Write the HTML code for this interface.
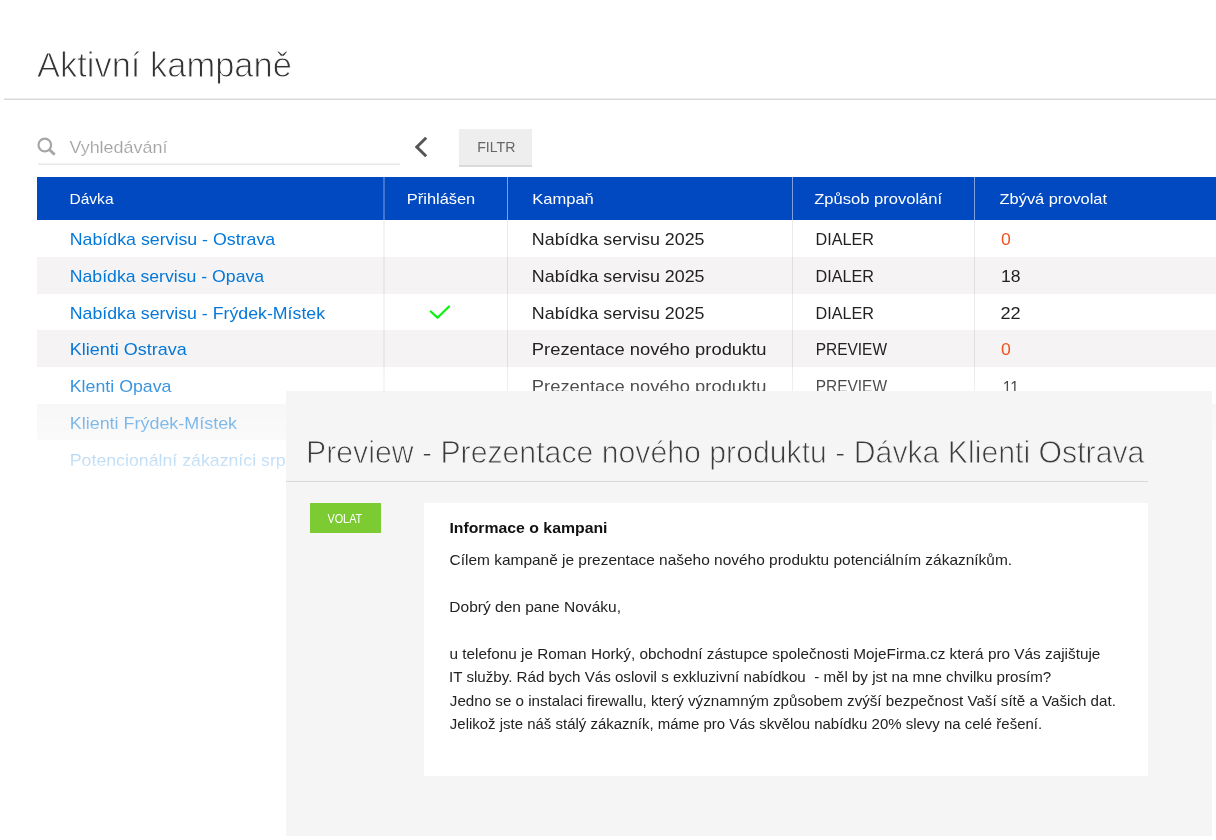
<!DOCTYPE html>
<html lang="cs">
<head>
<meta charset="utf-8">
<title>Aktivní kampaně</title>
<style>
*{box-sizing:border-box;margin:0;padding:0}
html,body{width:1216px;height:840px;overflow:hidden;background:#fff}
body{font-family:"Liberation Sans",sans-serif;color:#222;position:relative}
.a,.t{position:absolute;white-space:nowrap}
.t{left:0;top:0;transform-origin:0 0;will-change:transform}
#hr1{left:4px;top:98px;width:1212px;height:2px;background:linear-gradient(#ececec 50%,#d9d9d9 50%)}
#sline{left:38px;top:163px;width:362px;height:2px;background:linear-gradient(#f3f3f3 50%,#e8e8e8 50%)}
#fbtn{left:459.2px;top:129.2px;width:72.8px;height:37.9px;background:#eee;border-bottom:2px solid #dadada}
#thead{left:37.1px;top:176.75px;width:1179px;height:43px;background:#0049c1}
.vh{position:absolute;width:1px;top:176.75px;height:43px;background:rgba(255,255,255,.49)}
.vb{position:absolute;width:1px;top:219.67px;height:262px;background:rgba(0,0,0,.082)}
.st{position:absolute;left:37.1px;width:1179px;height:36.667px;background:#f5f3f4}
#fade{left:0;top:358px;width:1216px;height:135px;background:linear-gradient(to bottom,rgba(255,255,255,0) 0%,rgba(255,255,255,1) 100%)}
#panel{left:286px;top:390.7px;width:926.3px;height:445.3px;background:#f5f5f5}
#phr{left:286px;top:481px;width:862.2px;height:1px;background:#d8d8d8}
#vbtn{left:309.9px;top:503.2px;width:70.9px;height:30.2px;background:#7ccb33}
#box{left:423.5px;top:503.2px;width:724.7px;height:272.6px;background:#fff}
</style>
</head>
<body>
<div class="a" id="hr1"></div>
<svg class="a" style="left:36px;top:136px" width="22" height="22" viewBox="0 0 22 22"><circle cx="8.8" cy="9" r="6.3" fill="none" stroke="#a6a6a6" stroke-width="2.2"/><path d="M13.2 13.5L18.7 18.6" stroke="#a6a6a6" stroke-width="2.8"/></svg>
<div class="a" id="sline"></div>
<svg class="a" style="left:410px;top:132px" width="24" height="30" viewBox="0 0 24 30"><path d="M16.2 5.7L6.8 15L16.2 24.3" fill="none" stroke="#555" stroke-width="3"/></svg>
<div class="a" id="fbtn"></div>
<div class="t" id="title" style="font-size:34.0px;line-height:44.686px;color:#333;transform:translate(36.92px,41.67px) scale(1.0142,1.0294);-webkit-text-stroke:0.9px #fff">Aktivní kampaně</div>
<div class="t" id="stext" style="font-size:17px;line-height:22.000px;color:#a2a2a2;transform:translate(69.38px,136.71px) scale(1.0546,1.0000);-webkit-text-stroke:0.15px #fff">Vyhledávání</div>
<div class="t" id="filtr" style="font-size:13.5px;line-height:18.000px;color:#666;transform:translate(477.20px,137.40px) scale(1.0472,1.1111)">FILTR</div>
<div class="a" id="thead"></div>
<div class="vh" style="left:383px;width:2px;background:rgba(255,255,255,.25)"></div><div class="vh" style="left:507px"></div><div class="vh" style="left:792px"></div><div class="vh" style="left:974px"></div>
<div class="t" id="h1" style="font-size:15px;line-height:20.000px;color:#fff;transform:translate(69.51px,188.80px) scale(1.0351,1.0000)">Dávka</div>
<div class="t" id="h2" style="font-size:15px;line-height:20.000px;color:#fff;transform:translate(406.86px,188.80px) scale(1.0936,1.0000)">Přihlášen</div>
<div class="t" id="h3" style="font-size:15px;line-height:20.000px;color:#fff;transform:translate(532.15px,188.80px) scale(1.1034,1.0000)">Kampaň</div>
<div class="t" id="h4" style="font-size:15px;line-height:20.000px;color:#fff;transform:translate(814.22px,188.80px) scale(1.1031,1.0000)">Způsob provolání</div>
<div class="t" id="h5" style="font-size:15px;line-height:20.000px;color:#fff;transform:translate(999.62px,188.80px) scale(1.0916,1.0000)">Zbývá provolat</div>
<div class="st" style="top:257px;height:37px"></div>
<div class="st" style="top:330px;height:37px"></div>
<div class="st" style="top:404px;height:36px"></div>
<div class="vb" style="left:383px;width:2px;background:rgba(0,0,0,.042)"></div><div class="vb" style="left:507px"></div><div class="vb" style="left:792px"></div><div class="vb" style="left:974px"></div>
<div class="t" id="r0a" style="font-size:17px;line-height:22.000px;color:#0478d8;transform:translate(69.77px,228.51px) scale(1.0453,1.0000)">Nabídka servisu - Ostrava</div>
<div class="t" id="r0b" style="font-size:17px;line-height:22.000px;color:#222;transform:translate(531.87px,228.51px) scale(1.0498,1.0000)">Nabídka servisu 2025</div>
<div class="t" id="r0c" style="font-size:16.0px;line-height:20.706px;color:#222;transform:translate(815.59px,228.91px) scale(1.0115,1.0625)">DIALER</div>
<div class="t" id="r0d" style="font-size:17px;line-height:22.000px;color:#f4511e;transform:translate(1000.88px,228.51px) scale(1.0372,1.0000)">0</div>
<div class="t" id="r1a" style="font-size:17px;line-height:22.000px;color:#0478d8;transform:translate(69.78px,265.58px) scale(1.0388,1.0000)">Nabídka servisu - Opava</div>
<div class="t" id="r1b" style="font-size:17px;line-height:22.000px;color:#222;transform:translate(531.87px,265.58px) scale(1.0498,1.0000)">Nabídka servisu 2025</div>
<div class="t" id="r1c" style="font-size:16.0px;line-height:20.706px;color:#222;transform:translate(815.59px,265.58px) scale(1.0115,1.0625)">DIALER</div>
<div class="t" id="r1d" style="font-size:17px;line-height:22.000px;color:#222;transform:translate(1001.10px,265.58px) scale(1.0316,1.0000)">18</div>
<div class="t" id="r2a" style="font-size:17px;line-height:22.000px;color:#0478d8;transform:translate(69.77px,302.64px) scale(1.0433,1.0000)">Nabídka servisu - Frýdek-Místek</div>
<div class="t" id="r2b" style="font-size:17px;line-height:22.000px;color:#222;transform:translate(531.87px,302.64px) scale(1.0498,1.0000)">Nabídka servisu 2025</div>
<div class="t" id="r2c" style="font-size:16.0px;line-height:20.706px;color:#222;transform:translate(815.59px,302.64px) scale(1.0115,1.0625)">DIALER</div>
<div class="t" id="r2d" style="font-size:17px;line-height:22.000px;color:#222;transform:translate(1000.50px,302.64px) scale(1.0699,1.0000)">22</div>
<div class="t" id="r3a" style="font-size:17px;line-height:22.000px;color:#0478d8;transform:translate(69.75px,338.51px) scale(1.0590,1.0000)">Klienti Ostrava</div>
<div class="t" id="r3b" style="font-size:17px;line-height:22.000px;color:#222;transform:translate(531.83px,338.51px) scale(1.0797,1.0000)">Prezentace nového produktu</div>
<div class="t" id="r3c" style="font-size:15.0px;line-height:19.412px;color:#222;transform:translate(815.64px,337.71px) scale(1.0314,1.1333)">PREVIEW</div>
<div class="t" id="r3d" style="font-size:17px;line-height:22.000px;color:#f4511e;transform:translate(1000.88px,338.51px) scale(1.0372,1.0000)">0</div>
<div class="t" id="r4a" style="font-size:17px;line-height:22.000px;color:#0478d8;transform:translate(69.77px,375.58px) scale(1.0452,1.0000)">Klenti Opava</div>
<div class="t" id="r4b" style="font-size:17px;line-height:22.000px;color:#222;transform:translate(531.83px,375.58px) scale(1.0797,1.0000)">Prezentace nového produktu</div>
<div class="t" id="r4c" style="font-size:15.0px;line-height:19.412px;color:#222;transform:translate(815.64px,374.78px) scale(1.0314,1.1333)">PREVIEW</div>
<div class="t" id="r4d" style="font-size:15.0px;line-height:19.412px;color:#222;transform:translate(1002.73px,375.58px) scale(1.0377,1.1333)">11</div>
<div class="t" id="r5a" style="font-size:17px;line-height:22.000px;color:#0478d8;transform:translate(69.76px,412.64px) scale(1.0543,1.0000)">Klienti Frýdek-Místek</div>
<div class="t" id="r6a" style="font-size:17px;line-height:22.000px;color:#0478d8;transform:translate(69.77px,449.71px) scale(1.0432,1.0000)">Potencionální zákazníci srp</div>
<svg class="a" style="left:426px;top:302px" width="28" height="20" viewBox="0 0 28 20"><path d="M4.8 9.5L11.5 15.7L23 4.5" fill="none" stroke="#0cf40c" stroke-width="2.25" stroke-linecap="round" stroke-linejoin="round"/></svg>
<div class="a" id="fade"></div>
<div class="a" id="panel"></div>
<div class="a" id="phr"></div>
<div class="a" id="vbtn"></div>
<div class="a" id="box"></div>
<div class="t" id="ptitle" style="font-size:29.5px;line-height:38.065px;color:#3c3c3c;transform:translate(306.04px,432.26px) scale(1.0246,1.0508);-webkit-text-stroke:0.8px #f5f5f5">Preview - Prezentace nového produktu - Dávka Klienti Ostrava</div>
<div class="t" id="volat" style="font-size:10.5px;line-height:14.000px;color:#fff;transform:translate(327.39px,510.14px) scale(1.0354,1.1429)">VOLAT</div>
<div class="t" id="b0" style="font-size:15px;line-height:20.000px;color:#111;transform:translate(449.38px,517.70px) scale(1.0536,1.0000);font-weight:bold">Informace o kampani</div>
<div class="t" id="b1" style="font-size:15px;line-height:20.000px;color:#222;transform:translate(449.58px,549.70px) scale(1.0299,1.0000)">Cílem kampaně je prezentace našeho nového produktu potenciálním zákazníkům.</div>
<div class="t" id="b2" style="font-size:15px;line-height:20.000px;color:#222;transform:translate(449.31px,596.80px) scale(1.0344,1.0000)">Dobrý den pane Nováku,</div>
<div class="t" id="b3" style="font-size:15px;line-height:20.000px;color:#222;transform:translate(449.43px,643.50px) scale(1.0219,1.0000)">u telefonu je Roman Horký, obchodní zástupce společnosti MojeFirma.cz která pro Vás zajištuje</div>
<div class="t" id="b4" style="font-size:15px;line-height:20.000px;color:#222;transform:translate(449.02px,666.50px) scale(1.0083,1.0000)">IT služby. Rád bych Vás oslovil s exkluzivní nabídkou&nbsp; - měl by jst na mne chvilku prosím?</div>
<div class="t" id="b5" style="font-size:15px;line-height:20.000px;color:#222;transform:translate(449.85px,690.70px) scale(1.0095,1.0000)">Jedno se o instalaci firewallu, který významným způsobem zvýší bezpečnost Vaší sítě a Vašich dat.</div>
<div class="t" id="b6" style="font-size:14.5px;line-height:19.333px;color:#222;transform:translate(449.85px,714.10px) scale(1.0321,1.0345)">Jelikož jste náš stálý zákazník, máme pro Vás skvělou nabídku 20% slevy na celé řešení.</div>
</body>
</html>
